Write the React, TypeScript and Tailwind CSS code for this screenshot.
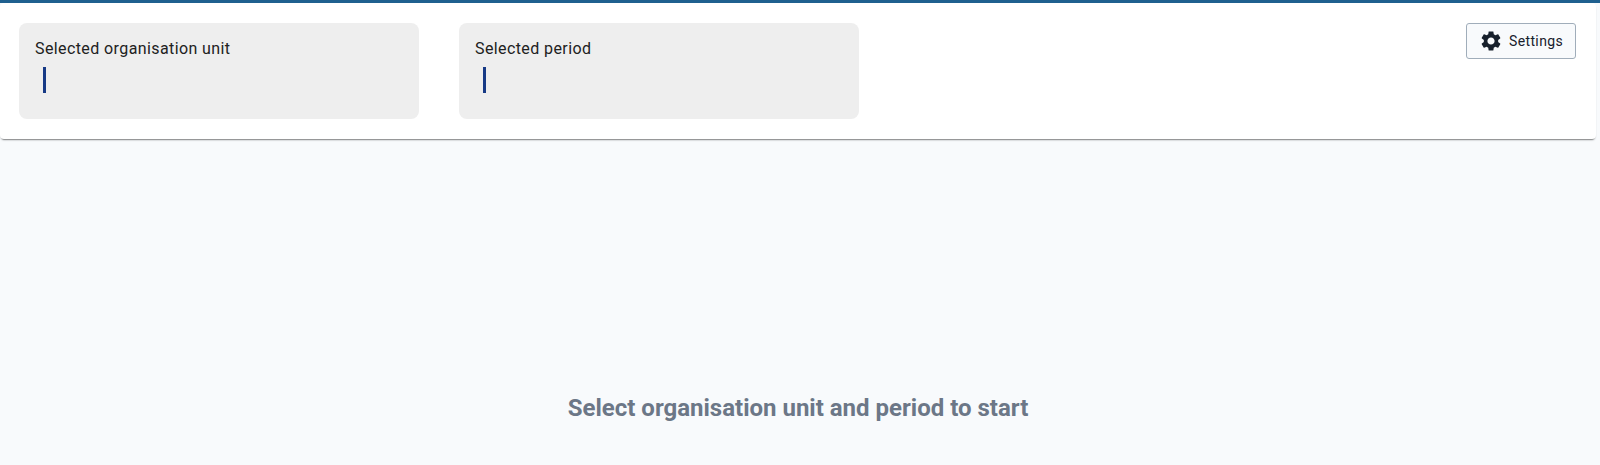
const cards = ["Selected organisation unit", "Selected period"];

function SettingsIcon() {
  return (
    <svg viewBox="0 0 24 24" className="size-6" fill="currentColor" aria-hidden="true">
      <path d="M19.14 12.94c.04-.3.06-.61.06-.94 0-.32-.02-.64-.07-.94l2.03-1.58c.18-.14.23-.41.12-.61l-1.92-3.32c-.12-.22-.37-.29-.59-.22l-2.39.96c-.5-.38-1.03-.7-1.62-.94l-.36-2.54c-.04-.24-.24-.41-.48-.41h-3.84c-.24 0-.43.17-.47.41l-.36 2.54c-.59.24-1.13.57-1.62.94l-2.39-.96c-.22-.08-.47 0-.59.22L2.74 8.87c-.12.21-.08.47.12.61l2.03 1.58c-.05.3-.09.63-.09.94s.02.64.07.94l-2.03 1.58c-.18.14-.23.41-.12.61l1.92 3.32c.12.22.37.29.59.22l2.39-.96c.5.38 1.03.7 1.62.94l.36 2.54c.05.24.24.41.48.41h3.84c.24 0 .44-.17.47-.41l.36-2.54c.59-.24 1.13-.56 1.62-.94l2.39.96c.22.08.47 0 .59-.22l1.92-3.32c.12-.22.07-.47-.12-.61l-2.01-1.58zM12 15.6c-1.98 0-3.6-1.62-3.6-3.6s1.62-3.6 3.6-3.6 3.6 1.62 3.6 3.6-1.62 3.6-3.6 3.6z" />
    </svg>
  );
}

export default function App() {
  return (
    <div className="min-h-screen border-t-3 border-[#1f608f] bg-[#f8fafc] font-[Roboto,sans-serif] text-[#212121]">
      <header className="mr-1 flex items-start justify-between rounded bg-white py-5 pr-5 pl-[19px] shadow-[0_3px_1px_-2px_rgba(0,0,0,0.2),0_2px_2px_-1px_rgba(0,0,0,0.3),0_1px_2px_-1px_rgba(0,0,0,0.2)]">
        <div className="flex gap-10">
          {cards.map((label) => (
            <section key={label} className="h-24 w-[400px] rounded-lg bg-[#eeeeee] px-4 py-3">
              <h2 className="text-base leading-7 tracking-wide">{label}</h2>
              <div className="mt-1 ml-2 h-[26px] w-[3px] bg-[#173a86]" />
            </section>
          ))}
        </div>
        <button
          type="button"
          className="flex h-9 items-center gap-1.5 rounded-[3px] border border-[#a0adba] bg-[#f8fafc] px-3 text-sm tracking-wide text-[#17202c]"
        >
          <SettingsIcon />
          Settings
        </button>
      </header>
      <main className="mr-1 px-4 pt-[253px] text-center">
        <h1 className="text-2xl leading-8 font-bold text-[#6c7787]">Select organisation unit and period to start</h1>
      </main>
    </div>
  );
}
